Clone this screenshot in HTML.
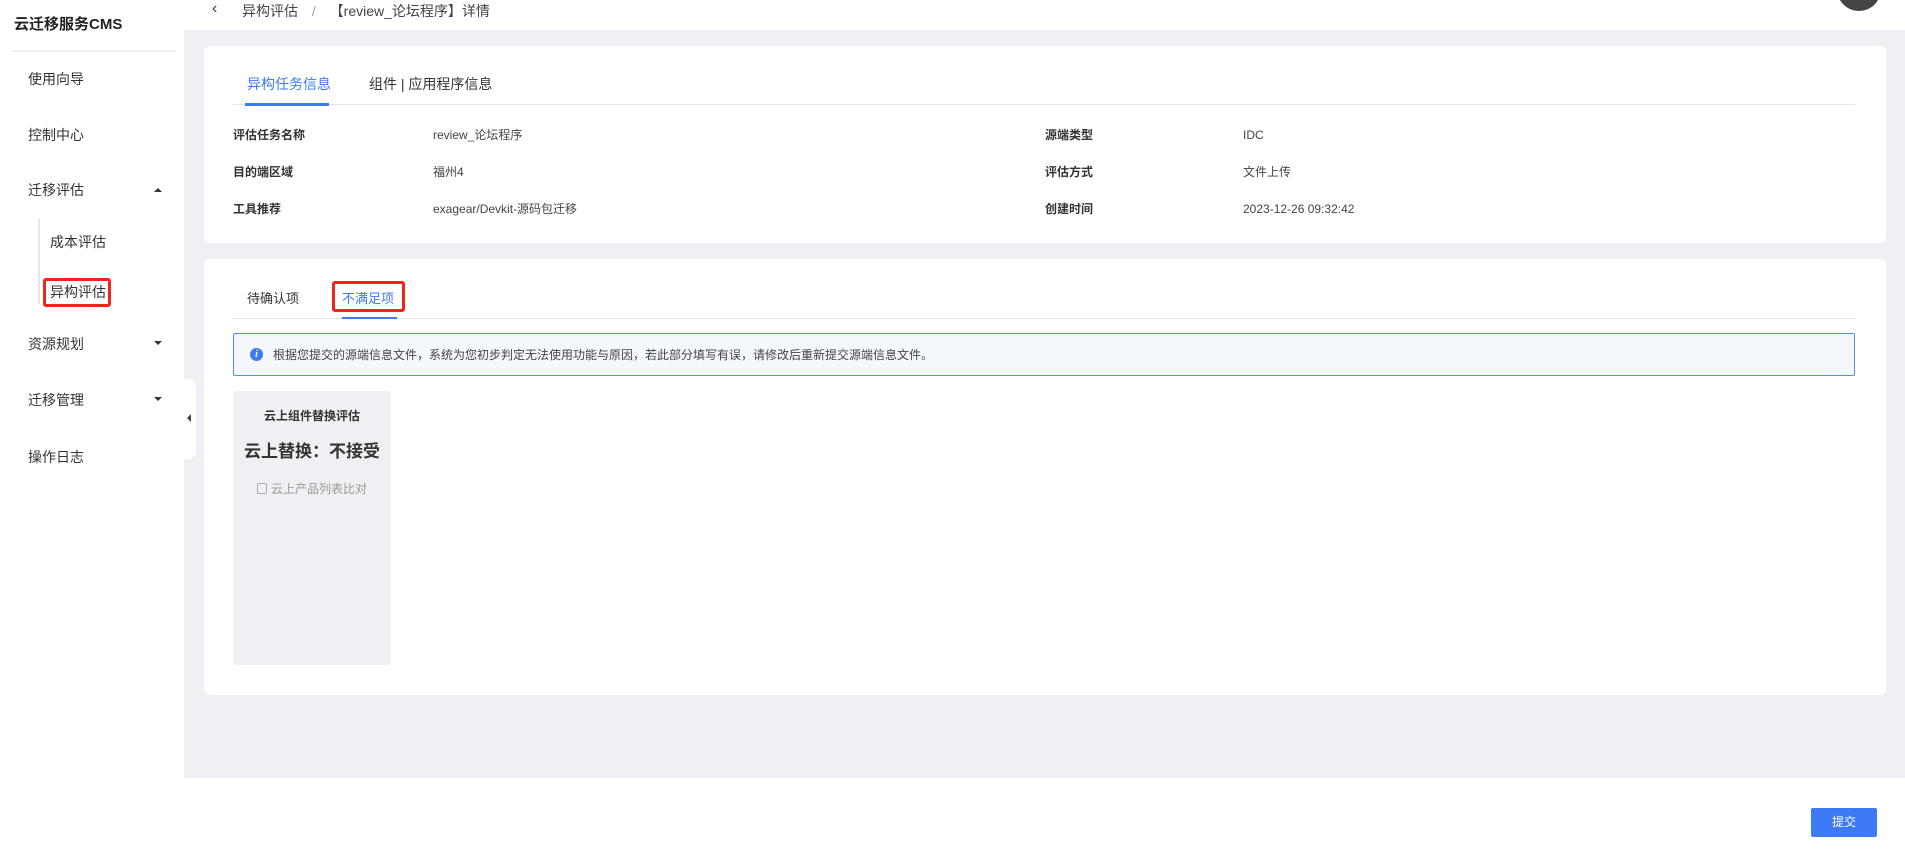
<!DOCTYPE html>
<html><head><meta charset="utf-8"><style>
*{box-sizing:border-box;margin:0;padding:0}
body{width:1905px;height:859px;position:relative;overflow:hidden;background:#eef0f4;font-family:"Liberation Sans","Noto Sans CJK SC",sans-serif;color:#333}
.a{position:absolute;white-space:nowrap}
.side{position:absolute;left:0;top:0;width:184px;height:859px;background:#fff}
.m{position:absolute;left:28px;font-size:14px;line-height:20px;color:#333}
.caret{position:absolute;left:154px;width:0;height:0;border-left:4px solid transparent;border-right:4px solid transparent}
.card{position:absolute;background:#fff;border-radius:6px}
.lb{font-size:12px;font-weight:bold;color:#333;line-height:16px}
.vl{font-size:12px;color:#444;line-height:16px}
</style></head><body>
<div class="side">
 <div class="a" style="left:14px;top:13px;font-size:15px;font-weight:bold;color:#222">云迁移服务CMS</div>
 <div class="a" style="left:12px;top:50px;width:164px;height:2px;background:#eef0f4"></div>
 <div class="m" style="top:69px">使用向导</div>
 <div class="m" style="top:125px">控制中心</div>
 <div class="m" style="top:180px">迁移评估</div>
 <div class="caret" style="top:188px;border-bottom:4px solid #333"></div>
 <div class="a" style="left:38px;top:219px;width:2px;height:85px;background:#e4e6eb"></div>
 <div class="m" style="left:50px;top:232px">成本评估</div>
 <div class="m" style="left:50px;top:282px">异构评估</div>
 <div class="a" style="left:43px;top:278px;width:68px;height:29px;border:3px solid #f2221c;border-radius:3px"></div>
 <div class="m" style="top:334px">资源规划</div>
 <div class="caret" style="top:341px;border-top:4px solid #333"></div>
 <div class="m" style="top:390px">迁移管理</div>
 <div class="caret" style="top:397px;border-top:4px solid #333"></div>
 <div class="m" style="top:447px">操作日志</div>
</div>
<div class="a" style="left:182px;top:379px;width:14px;height:80px;background:#fff;border-radius:0 8px 8px 0"></div>
<div class="a" style="left:187px;top:414px;border-top:4px solid transparent;border-bottom:4px solid transparent;border-right:4px solid #444"></div>
<div class="a" style="left:184px;top:0;width:1721px;height:30px;background:#fff"></div>
<div class="a" style="left:212px;top:0px;font-size:16px;color:#333">&#8249;</div>
<div class="a" style="left:242px;top:1px;font-size:14px;color:#444">异构评估 <span style="color:#999;margin:0 10px">/</span> 【review_论坛程序】详情</div>
<div class="a" style="left:1837px;top:-22px;width:44px;height:33px;border-radius:0 0 22px 22px;background:#444"></div>

<div class="card" style="left:204px;top:46px;width:1682px;height:197px"></div>
<div class="a" style="left:247px;top:74px;font-size:14px;color:#3d7af5">异构任务信息</div>
<div class="a" style="left:369px;top:74px;font-size:14px;color:#333">组件 | 应用程序信息</div>
<div class="a" style="left:233px;top:104px;width:1622px;height:1px;background:#e2e4ea"></div>
<div class="a" style="left:245px;top:103px;width:84px;height:3px;background:#3d7af5"></div>
<div class="a lb" style="left:233px;top:127px">评估任务名称</div><div class="a vl" style="left:433px;top:127px">review_论坛程序</div>
<div class="a lb" style="left:233px;top:164px">目的端区域</div><div class="a vl" style="left:433px;top:164px">福州4</div>
<div class="a lb" style="left:233px;top:201px">工具推荐</div><div class="a vl" style="left:433px;top:201px">exagear/Devkit-源码包迁移</div>
<div class="a lb" style="left:1045px;top:127px">源端类型</div><div class="a vl" style="left:1243px;top:127px">IDC</div>
<div class="a lb" style="left:1045px;top:164px">评估方式</div><div class="a vl" style="left:1243px;top:164px">文件上传</div>
<div class="a lb" style="left:1045px;top:201px">创建时间</div><div class="a vl" style="left:1243px;top:201px">2023-12-26 09:32:42</div>

<div class="card" style="left:204px;top:259px;width:1682px;height:436px"></div>
<div class="a" style="left:247px;top:288px;font-size:13px;color:#333">待确认项</div>
<div class="a" style="left:342px;top:288px;font-size:13px;color:#3d7af5">不满足项</div>
<div class="a" style="left:332px;top:281px;width:73px;height:31px;border:3px solid #f2221c;border-radius:3px"></div>
<div class="a" style="left:233px;top:318px;width:1622px;height:1px;background:#e2e4ea"></div>
<div class="a" style="left:342px;top:317px;width:55px;height:2px;background:#3d7af5"></div>
<div class="a" style="left:233px;top:333px;width:1622px;height:43px;background:#f4f8fd;border:1px solid #5b8def;border-radius:2px"></div>
<div class="a" style="left:250px;top:348px;width:13px;height:13px;border-radius:50%;background:#3d7af5;color:#fff;font-size:10px;font-weight:bold;font-style:italic;text-align:center;line-height:13px;font-family:'Liberation Serif',serif">i</div>
<div class="a" style="left:273px;top:346px;font-size:12px;color:#444">根据您提交的源端信息文件，系统为您初步判定无法使用功能与原因，若此部分填写有误，请修改后重新提交源端信息文件。</div>
<div class="a" style="left:233px;top:391px;width:158px;height:274px;background:#eff0f4;border-radius:2px"></div>
<div class="a" style="left:233px;top:407px;width:158px;text-align:center;font-size:12px;font-weight:bold;color:#333">云上组件替换评估</div>
<div class="a" style="left:233px;top:437px;width:158px;text-align:center;font-size:17px;font-weight:bold;color:#333">云上替换：不接受</div>
<div class="a" style="left:233px;top:480px;width:158px;text-align:center;font-size:12px;color:#999"><span style="display:inline-block;width:10px;height:11px;border:1px solid #aaa;border-radius:2px;vertical-align:-1px;margin-right:4px"></span>云上产品列表比对</div>

<div class="a" style="left:184px;top:778px;width:1721px;height:81px;background:#fff"></div>
<div class="a" style="left:1811px;top:808px;width:66px;height:29px;background:#3d7af5;border-radius:2px;color:#fff;font-size:12px;text-align:center;line-height:29px">提交</div>
</body></html>
